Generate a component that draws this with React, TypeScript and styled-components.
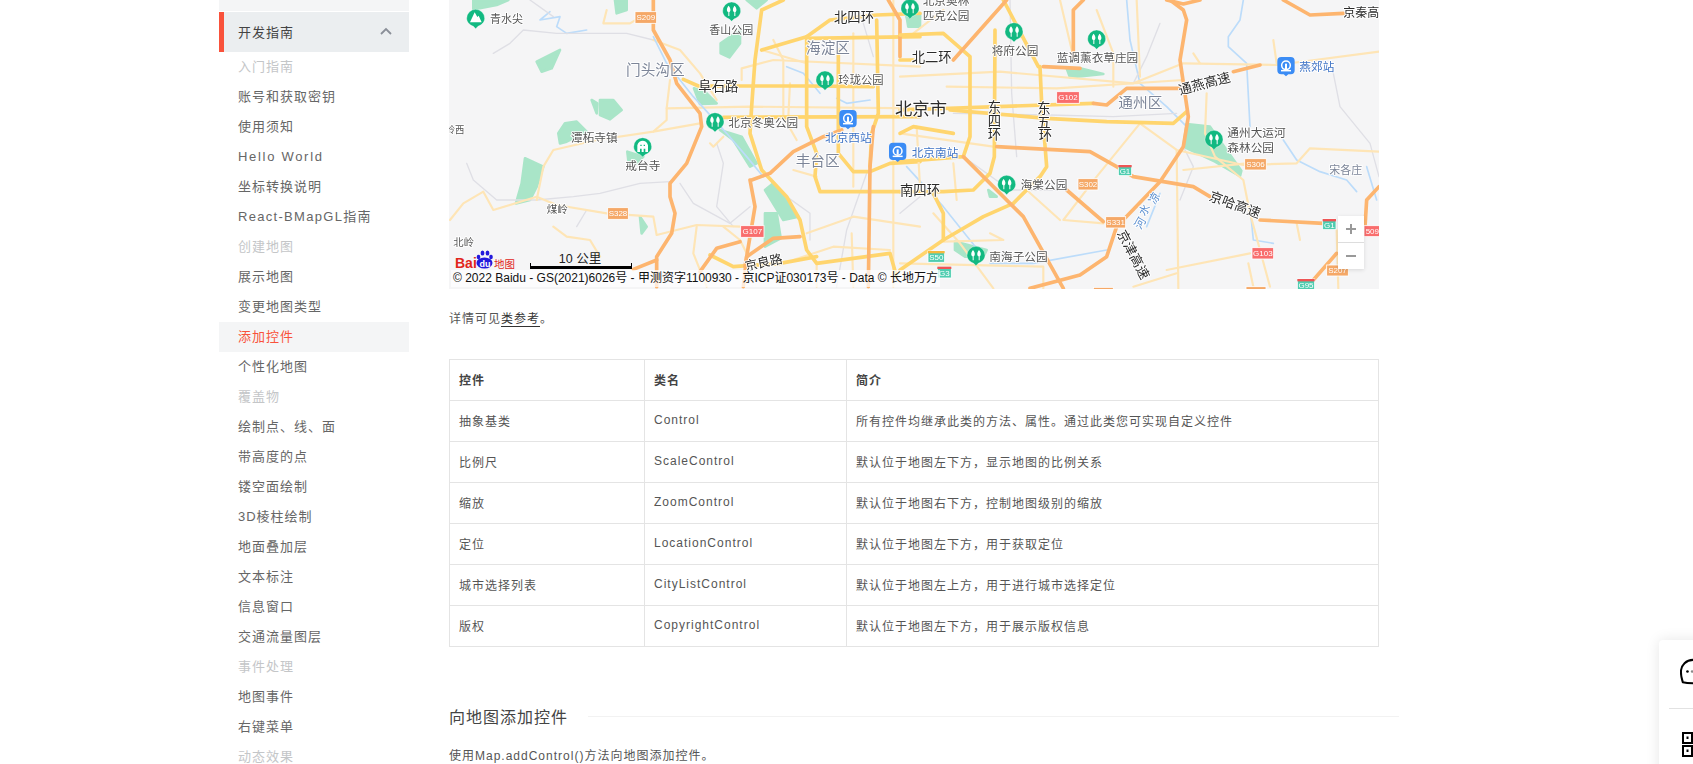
import React from "react";
import styled, { createGlobalStyle } from "styled-components";

const Global = createGlobalStyle`
  html, body { margin: 0; padding: 0; background: #fff; }
  body { font-family: "Liberation Sans", "Noto Sans CJK SC", sans-serif; color: #555; letter-spacing: 1px; }
`;
const Page = styled.div`
  position: relative; width: 1693px; height: 764px; overflow: hidden;
  display: flex; align-items: flex-start; padding-left: 219px; box-sizing: border-box; gap: 40px;
`;
const Sidebar = styled.nav`width: 190px; flex: none; font-size: 13px; display: flex; flex-direction: column;`;
const TopStub = styled.div`height: 11px; background: #f4f5f6; margin-bottom: 1px;`;
const GroupHead = styled.div`
  height: 40px; background: #ebeef0; border-left: 5px solid #f9523b; box-sizing: border-box;
  padding: 0 17px 2px 14px; display: flex; align-items: center; justify-content: space-between; color: #444;
`;
const Item = styled.div<{ $kind?: string; $ls?: number }>`
  height: 30px; line-height: 30px; padding-left: 19px; flex: none;
  letter-spacing: ${p => p.$ls ?? 1}px;
  color: ${p => (p.$kind === "muted" ? "#c4c6c8" : p.$kind === "active" ? "#f9523b" : "#666")};
  background: ${p => (p.$kind === "active" ? "#f4f5f6" : "transparent")};
`;
const Content = styled.main`width: 930px; flex: none; font-size: 12px;`;
const MapFrame = styled.div`position: relative; width: 930px; height: 289px; overflow: hidden; background: #f5f5f6;`;
const MapSvg = styled.svg`display: block; width: 930px; height: 289px; filter: blur(.3px);`;
const Road = styled.polyline<{ $k: string }>`
  fill: none; stroke-linecap: round; stroke-linejoin: round;
  stroke: ${p => ({ h: "#fdb56f", y: "#ffd56e", l: "#fee5b6", g: "#dfdfe5", b: "#bcdcfa" } as Record<string, string>)[p.$k]};
  stroke-width: ${p => ({ h: 11, y: 11, l: 6.5, g: 4, b: 5 } as Record<string, number>)[p.$k]};
`;
const Park = styled.polygon`fill: #a9e5c8; stroke: #a9e5c8; stroke-width: 8; stroke-linejoin: round;`;
const Lbl = styled.text<{ $c?: string; $s: number }>`
  font-family: "Noto Sans CJK SC", sans-serif; letter-spacing: 0;
  font-size: ${p => p.$s}px; fill: ${p => p.$c || "#555"};
  stroke: rgba(255,255,255,.9); stroke-width: 6px; paint-order: stroke; stroke-linejoin: round;
`;
const ShieldText = styled.text`font-family: "Liberation Sans", sans-serif; font-size: 24px; letter-spacing: 0; fill: #fff; text-anchor: middle;`;
const Zoom = styled.div`
  position: absolute; left: 889px; top: 216px; width: 26px; height: 53px; background: #fff;
  box-shadow: 0 1px 4px rgba(0,0,0,.12); display: flex; flex-direction: column;
`;
const ZoomBtn = styled.div`
  flex: 1; display: flex; align-items: center; justify-content: center; color: #999;
  & + & { border-top: 1px solid #ddd; }
`;
const Copyright = styled.div`
  position: absolute; left: 2px; top: 270px; height: 17px; line-height: 17px; padding: 0 2px;
  font-size: 12px; letter-spacing: 0; color: #111; background: rgba(255,255,255,.72); white-space: nowrap;
`;
const ScaleBar = styled.div`
  position: absolute; left: 81px; top: 252px; width: 102px; height: 17px; box-sizing: border-box;
  border-bottom: 3px solid #000;
  font-size: 12.500px; letter-spacing: 0; color: #222; text-align: center; line-height: 14px; padding-right: 2px;
  &::before, &::after { content: ""; position: absolute; bottom: -3px; width: 1px; height: 6px; background: #000; }
  &::before { left: 0; }
  &::after { right: 0; }
`;
const LogoWrap = styled.svg`position: absolute; left: 5px; top: 249px; width: 62px; height: 20px;`;
const Para = styled.p`margin: 0; height: 20px; line-height: 20px; color: #555; white-space: nowrap;`;
const FirstPara = styled(Para)`margin-top: 20px;`;
const Link = styled.a`color: #333; border-bottom: 1px solid #333; letter-spacing: 1px;`;
const Table = styled.table`
  margin-top: 30px; width: 930px; border-collapse: collapse; table-layout: fixed; font-size: 12px;
  th, td { border: 1px solid #e4e4e4; height: 41px; padding: 0 9px 2px; text-align: left; box-sizing: border-box; white-space: nowrap; }
  th { font-weight: 700; color: #444; }
  td { color: #555; font-weight: 400; }
`;
const WideCol = styled.col<{ $w: number }>`width: ${p => p.$w}px;`;
const Heading = styled.div`display: flex; align-items: center; width: 950px; margin-top: 57px; height: 24px; font-size: 16px; color: #444;`;
const HeadRule = styled.span`flex: 1; height: 1px; background: #f2f2f2; margin-left: 20px;`;
const MethodPara = styled(Para)`margin-top: 18px;`;
const FloatPanel = styled.aside`
  position: absolute; left: 1659px; top: 640px; width: 80px; height: 160px; background: #fff;
  border-radius: 4px 0 0 0; box-shadow: 0 0 14px rgba(0,0,0,.1);
  display: flex; flex-direction: column; align-items: flex-start; padding-left: 10px; box-sizing: border-box;
`;
const FloatIcon = styled.svg<{ $mt: number; $ml: number }>`display: block; margin-top: ${p => p.$mt}px; margin-left: ${p => p.$ml}px; flex: none;`;
const FloatRule = styled.div`width: 60px; height: 1px; background: #e2e2e2; margin-top: 22px;`;

const nav: [string, string?, number?][] = [
  ["入门指南", "muted"], ["账号和获取密钥"], ["使用须知"], ["Hello World", "", 1.7], ["坐标转换说明"], ["React-BMapGL指南", "", 1.3],
  ["创建地图", "muted"], ["展示地图"], ["变更地图类型"], ["添加控件", "active"], ["个性化地图"], ["覆盖物", "muted"],
  ["绘制点、线、面"], ["带高度的点"], ["镂空面绘制"], ["3D棱柱绘制"], ["地面叠加层"], ["文本标注"], ["信息窗口"], ["交通流量图层"],
  ["事件处理", "muted"], ["地图事件"], ["右键菜单"], ["动态效果", "muted"],
];
const rows = [
  ["抽象基类", "Control", "所有控件均继承此类的方法、属性。通过此类您可实现自定义控件"],
  ["比例尺", "ScaleControl", "默认位于地图左下方\uFF0C显示地图的比例关系"],
  ["缩放", "ZoomControl", "默认位于地图右下方\uFF0C控制地图级别的缩放"],
  ["定位", "LocationControl", "默认位于地图左下方\uFF0C用于获取定位"],
  ["城市选择列表", "CityListControl", "默认位于地图左上方\uFF0C用于进行城市选择定位"],
  ["版权", "CopyrightControl", "默认位于地图左下方\uFF0C用于展示版权信息"],
];

type R = [string, string];
const roadsA: R[] = [
  ["b", "330,35 300,60 360,50 350,80 380,100 440,90"], ["g", "160,160 210,130 250,90 350,100 560,100 640,120"], ["g", "270,0 340,50"],
  ["g", "80,490 100,540 170,600 290,600 400,590 480,580 600,550 690,545"], ["g", "720,550 760,610 870,670 930,620"],
  ["g", "410,680 440,630"], ["g", "1270,70 1300,170"], ["g", "1280,520 1220,690 1190,860"], ["g", "960,500 1040,590 1110,640 1110,720"],
  ["g", "1380,640 1440,590"], ["g", "830,430 850,490 830,620 880,680"],
  ["l", "30,660 70,610 130,575 160,630 290,590 350,615 500,640 640,650 650,705 770,675 900,680"],
  ["l", "290,600 310,500 340,450 470,420 640,395 780,370"], ["l", "640,395 680,360 680,325 930,320 1440,325"], ["l", "680,325 690,240"],
  ["l", "640,120 720,150 780,220 830,300"], ["l", "340,680 380,710 450,720 480,770"], ["l", "770,680 760,760 800,860"],
  ["l", "850,680 900,720 920,760"], ["l", "1000,120 1030,180 1030,350 1070,420"], ["l", "905,240 905,205 1000,180 1440,200"],
  ["l", "965,150 1100,190"], ["l", "1240,100 1240,560"], ["l", "1360,0 1360,860"], ["l", "1050,250 1045,350"], ["l", "1130,790 1130,860"],
  ["l", "1235,700 1240,860"], ["l", "1100,700 1240,650 1440,680"], ["l", "1060,780 1180,740 1350,750"], ["l", "500,30 490,70 570,70 620,40"],
  ["l", "810,430 820,440 850,410"], ["l", "1130,530 1060,510"], ["b", "1040,200 1090,220 1140,280"], ["b", "1190,295 1220,310 1290,300"],
  ["b", "640,110 680,190 760,290 860,400 920,470 970,530"],
  ["y", "1030,0 965,30 945,180 935,320 930,400 965,510 1040,590 1080,660 1100,750 1130,790 1350,760 1370,830"],
  ["y", "965,150 1100,110 1170,60 1310,45 1440,40"], ["y", "1100,110 1100,380 1130,460 1125,530 1140,575 1380,575"],
  ["y", "1195,150 1195,460 1240,515 1290,515 1350,490 1440,485"], ["y", "1100,115 1440,110"], ["y", "1310,60 1315,340 1295,400 1290,500"],
  ["y", "730,238 775,258 1100,258 1300,260"], ["y", "850,352 1440,350"], ["y", "810,765 880,800 1020,790 1130,770"],
  ["h", "640,0 640,90 690,180 710,250 780,340 785,380 740,490 690,550 690,590 705,640 695,700 650,770 650,860"], ["h", "580,808 650,780"],
  ["h", "780,815 830,745 900,725"], ["h", "910,860 920,770 1000,715 1080,710"], ["h", "935,540 990,520 1060,455 1150,410 1205,390"],
  ["h", "930,540 945,620 915,800"], ["h", "1285,860 1290,500 1300,380"], ["h", "1345,0 1380,60 1380,170"],
];
const roadsB: R[] = [
  ["b", "1030,0 1020,60 985,110 985,140 1040,190 1050,380"], ["b", "1150,420 1190,480 1260,515 1340,540 1370,575"],
  ["b", "720,250 800,320 860,380"], ["b", "780,580 740,680"], ["b", "270,790 400,790 620,750"], ["b", "20,500 130,620 250,770"], ["b", "680,0 690,120 720,250"],
  ["b", "1050,620 1060,720 1120,730"], ["b", "1400,500 1430,600"],
  ["g", "330,0 335,280 350,470"], ["g", "780,70 740,170 700,250"], ["g", "1300,220 1320,320 1410,430 1437,530"], ["g", "160,340 450,345 640,350 830,340"],
  ["g", "190,470 330,570 500,570 610,660"], ["g", "850,440 880,500 840,600"],
  ["l", "0,230 300,215 700,250 850,190 1130,195 1437,155"], ["l", "140,260 470,265 850,240"], ["l", "480,0 520,170"], ["l", "590,30 640,160 640,260"],
  ["l", "710,0 720,230"], ["l", "880,160 900,190"], ["l", "0,400 280,440"], ["l", "720,370 590,530 490,660 610,670"], ["l", "380,570 480,660"],
  ["l", "720,370 830,450 1030,495 1190,490 1230,445 1437,455"], ["l", "830,450 835,865"], ["l", "850,510 1040,490"], ["l", "920,280 915,400 945,470 1030,540 1050,640 1110,860"],
  ["l", "1120,120 1130,190"], ["l", "130,30 40,100"], ["l", "50,380 60,560"], ["l", "160,490 170,600"], ["l", "100,640 180,730 280,865"], ["l", "270,700 310,720 130,725"],
  ["l", "800,810 1050,760"], ["l", "1045,790 1060,860"], ["l", "0,790 430,800 430,865"], ["l", "1190,670 1200,720"], ["l", "1310,690 1315,865"], ["l", "700,860 830,820"],
  ["y", "0,105 130,100 210,170 210,410 190,470 0,485"], ["y", "285,90 283,470 270,520 220,570 130,575 0,575"], ["y", "100,580 130,640 130,720"],
  ["y", "0,330 580,310"], ["y", "0,180 40,180"], ["y", "420,200 425,310 440,500 420,530 340,610 250,650 130,720 0,810"],
  ["y", "150,330 440,355 620,365 820,370 860,335"], ["y", "310,0 415,200"], ["y", "0,400 40,380 160,400"],
  ["h", "160,180 320,0"], ["h", "290,440 570,455 650,500 700,530 880,560 930,590"], ["h", "1080,660 1270,670"],
  ["h", "810,0 850,30 860,60 840,180 865,350 850,440 780,545 650,680 620,770 540,825 390,865"], ["h", "190,470 370,650 490,865"],
  ["h", "580,310 620,315 680,265 840,265"], ["h", "1000,215 1080,195"], ["h", "430,200 540,205"], ["h", "1150,0 1230,45 1330,40"],
  ["h", "1437,560 1400,600 1395,680"], ["h", "1240,840 1310,760"], ["h", "520,170 520,30 550,0"], ["h", "500,570 610,665"], ["h", "800,0 850,12 900,0"],
];
const parksA = [
  "100,0 205,0 170,15 100,28", "290,185 360,150 335,205 305,215", "480,300 520,300 545,330 510,358 480,345", "455,300 472,310 470,340", "355,400 375,370 410,365 440,395 380,425 360,430",
  "255,475 310,500 290,560 270,600 228,610 245,550", "562,455 610,470 590,490 565,480", "842,130 900,90 900,130 868,172 842,160", "525,0 560,0 560,30 530,40",
  "920,0 950,25 980,0", "1000,550 1075,650 1030,660 975,570", "975,640 1010,640 1022,715 975,740", "762,265 800,280 830,310 780,312", "840,390 905,410 950,490 930,500 880,420", "600,650 620,680 605,700", "1400,50 1440,40 1440,80 1410,80",
];
const parksB = [
  "860,372 930,380 1024,512 1020,528 945,485 850,440", "500,205 540,205 610,222 510,232", "20,50 60,50 50,80 25,80", "165,725 260,750 250,770 195,770 165,750", "265,570 290,590 270,590",
];
type L = [string, number, number, number, string?, number?];
const dark = "#2b2b2b", gray = "#7c8598", blue = "#3d72c4";
const labelsA: L[] = [
  ["青水尖", 150, 68, 33], ["香山公园", 808, 103, 33], ["北四环", 1182, 65, 40, dark], ["海淀区", 1098, 158, 44, gray], ["门头沟区", 558, 224, 44, gray],
  ["阜石路", 775, 272, 40, dark], ["玲珑公园", 1195, 252, 34], ["北京市", 1365, 345, 52, dark], ["北京冬奥公园", 865, 380, 35], ["北京西站", 1155, 427, 35, blue],
  ["岭西", 17, 400, 28], ["潭柘寺镇", 393, 425, 35], ["戒台寺", 556, 510, 35], ["丰台区", 1067, 497, 44, gray], ["煤岭", 320, 640, 32], ["北岭", 40, 738, 31],
  ["京良路", 918, 812, 38, dark, -12], ["南四环", 1380, 585, 40, dark],
];
const labelsB: L[] = [
  ["北京奥林", 68, 15, 35], ["匹克公园", 68, 60, 35], ["将府公园", 275, 165, 35], ["北二环", 35, 187, 40, dark], ["蓝调薰衣草庄园", 470, 187, 35], ["京秦高", 1330, 52, 36, dark],
  ["燕郊站", 1198, 212, 35, blue], ["通燕高速", 840, 285, 40, dark, -15], ["通州区", 655, 325, 44, gray], ["东", 263, 335, 40, dark], ["四", 263, 378, 40, dark], ["环", 263, 418, 40, dark],
  ["东", 412, 340, 40, dark], ["五", 412, 382, 40, dark], ["环", 416, 420, 40, dark], ["通州大运河", 982, 412, 35], ["森林公园", 982, 457, 35], ["宋各庄", 1288, 522, 33, gray],
  ["海棠公园", 362, 568, 35], ["北京南站", 35, 470, 35, blue], ["京哈高速", 925, 600, 40, dark, 20], ["凉", 765, 615, 34, "#5b8fd0", -60], ["水", 735, 650, 34, "#5b8fd0", -60], ["河", 722, 690, 34, "#5b8fd0", -60],
  ["京津高速", 650, 700, 40, dark, 62], ["南海子公园", 268, 782, 35],
];
type S = [string, number, number, number, number, string, string?];
const org = "#f5a867", red = "#f96d6d", grn = "#4fcdb0";
const shieldsA: S[] = [["S209", 585, 35, 65, 35, org], ["S328", 503, 623, 62, 35, org], ["G107", 902, 677, 70, 35, red]];
const shieldsB: S[] = [
  ["G102", 470, 275, 68, 35, red], ["S306", 1034, 476, 65, 34, org], ["G1", 655, 495, 40, 32, grn, "#e55"], ["S302", 534, 536, 60, 34, org], ["S331", 617, 650, 60, 34, org],
  ["G1", 1268, 657, 40, 32, grn, "#e55"], ["509", 1392, 677, 50, 33, red], ["G103", 1056, 743, 65, 34, red], ["S50", 84, 753, 50, 34, grn, "#f5b83d"], ["G3", 112, 800, 42, 34, grn, "#e55"],
  ["S207", 1280, 795, 65, 33, org], ["G95", 1192, 837, 52, 32, grn, "#e55"], ["", 580, 862, 60, 20, org], ["", 1038, 860, 60, 20, org],
];
const pinsA: [number, number, string][] = [[107, 55, "m"], [875, 33, "t"], [1410, 25, "t"], [1155, 240, "t"], [825, 365, "t"], [608, 440, "g"]];
const pinsB: [number, number, string][] = [[30, 25, "t"], [342, 95, "t"], [590, 117, "t"], [942, 418, "t"], [320, 553, "t"], [228, 766, "t"]];
const stationsA: [number, number][] = [[1224, 357], [1373, 455]];
const stationsB: [number, number][] = [[1158, 198]];

const Pin = ({ x, y, t }: { x: number; y: number; t: string }) => (
  <g transform={`translate(${x} ${y})`}>
    <path d="M-27 0a27 27 0 1 1 54 0c0 14-12 21-20 24l-7 7-7-7c-8-3-20-10-20-24z" fill="#12b981" stroke="#fff" strokeWidth="1" />
    {t === "m" && <path d="M-17 12 -3-18 5-4 9-8 18 12z" fill="#fff" />}
    {t === "t" && <path d="M-9-16c-6 6-7 16-2 19h1v12h3V3h1c4-4 3-13-3-19zM9-16c-6 6-7 16-2 19h1v12h3V3h1c4-4 3-13-3-19z" fill="#fff" />}
    {t === "g" && <path d="M-16 16V-4C-14-14-6-18 0-18S14-14 16-4V16H8V6H3V16H-3V6H-8V16zM-7-6h4v4h-4zM3-6h4v4H3z" fill="#fff" fillRule="evenodd" />}
  </g>
);
const Station = ({ x, y }: { x: number; y: number }) => (
  <g transform={`translate(${x} ${y})`}>
    <path d="M-14-27H14A12 12 0 0 1 26-15V13A12 12 0 0 1 14 25H7L0 31-7 25H-14A12 12 0 0 1-26 13V-15A12 12 0 0 1-14-27z" fill="#3b8cf5" />
    <circle r="13" cy="-2" fill="none" stroke="#fff" strokeWidth="4.5" />
    <path d="M-15 14H15" stroke="#fff" strokeWidth="4.5" />
    <rect x="-3" y="-7" width="6" height="16" fill="#fff" />
  </g>
);
const Layer = ({ roads, parks, tx }: { roads: R[]; parks: string[]; tx: number }) => (
  <g transform={`translate(${tx} 0) scale(.33333)`}>
    {parks.map(p => <Park key={p} points={p} />)}
    {roads.map(([k, p]) => <Road key={p} $k={k} points={p} />)}
  </g>
);
const Overlay = ({ labels, shields, pins, stations, tx }: { labels: L[]; shields: S[]; pins: [number, number, string][]; stations: [number, number][]; tx: number }) => (
  <g transform={`translate(${tx} 0) scale(.33333)`}>
    {shields.map(([t, x, y, w, h, c, top], i) => (
      <g key={i}>
        <rect x={x} y={y} width={w} height={h} fill={c} stroke="#fff" strokeWidth="2.5" />
        {top && <rect x={x} y={y} width={w} height={7} fill={top} />}
        <ShieldText x={x + w / 2} y={y + h / 2 + (top ? 11 : 9)}>{t}</ShieldText>
      </g>
    ))}
    {labels.map(([t, x, y, s, c, r], i) => (
      <Lbl key={i} x={x} y={y} $s={s} $c={c} transform={r ? `rotate(${r} ${x} ${y})` : undefined}>{t}</Lbl>
    ))}
    {pins.map(([x, y, t], i) => <Pin key={i} x={x} y={y} t={t} />)}
    {stations.map(([x, y], i) => <Station key={i} x={x} y={y} />)}
  </g>
);

const LogoBai = styled.text`font-family: "Liberation Sans", sans-serif; font-weight: 700; font-size: 14px; letter-spacing: 0; fill: #e1251b;`;
const LogoDu = styled.text`font-family: "Liberation Sans", sans-serif; font-weight: 700; font-size: 9px; letter-spacing: 0; fill: #fff;`;
const LogoCn = styled.text`font-family: "Noto Sans CJK SC", sans-serif; font-size: 10.500px; letter-spacing: 0; fill: #e1251b;`;
const Logo = () => (
  <LogoWrap viewBox="0 0 62 20">
    <LogoBai x="1" y="19">Bai</LogoBai>
    <g fill="#2319dc">
      <ellipse cx="30.500" cy="14" rx="8" ry="5.500" /><ellipse cx="24.500" cy="8" rx="1.800" ry="2.300" /><ellipse cx="28.500" cy="4" rx="1.900" ry="2.500" />
      <ellipse cx="33.500" cy="4" rx="1.900" ry="2.500" /><ellipse cx="37" cy="8" rx="1.800" ry="2.300" />
    </g>
    <LogoDu x="25.500" y="18">du</LogoDu>
    <LogoCn x="40" y="18.500">地图</LogoCn>
  </LogoWrap>
);

export default function App() {
  return (
    <>
      <Global />
      <Page>
        <Sidebar>
          <TopStub />
          <GroupHead>
            开发指南
            <svg width="12" height="8" viewBox="0 0 12 8"><path d="M1 7l5-5 5 5" fill="none" stroke="#8a8f98" strokeWidth="1.8" /></svg>
          </GroupHead>
          {nav.map(([t, k, ls]) => <Item key={t} $kind={k} $ls={ls}>{t}</Item>)}
        </Sidebar>
        <Content>
          <MapFrame>
            <MapSvg viewBox="0 0 930 289">
              <Layer roads={roadsA} parks={parksA} tx={-9} />
              <Layer roads={roadsB} parks={parksB} tx={451} />
              <Overlay labels={labelsA} shields={shieldsA} pins={pinsA} stations={stationsA} tx={-9} />
              <Overlay labels={labelsB} shields={shieldsB} pins={pinsB} stations={stationsB} tx={451} />
            </MapSvg>
            <Zoom>
              <ZoomBtn><svg width="12" height="12" viewBox="0 0 12 12"><path d="M6 1v10M1 6h10" stroke="#999" strokeWidth="2" /></svg></ZoomBtn>
              <ZoomBtn><svg width="12" height="12" viewBox="0 0 12 12"><path d="M1 6h10" stroke="#999" strokeWidth="2" /></svg></ZoomBtn>
            </Zoom>
            <Logo />
            <ScaleBar>10 公里</ScaleBar>
            <Copyright>© 2022 Baidu - GS(2021)6026号 - 甲测资字1100930 - 京ICP证030173号 - Data © 长地万方</Copyright>
          </MapFrame>
          <FirstPara>详情可见<Link>类参考</Link>。</FirstPara>
          <Table>
            <colgroup><WideCol $w={195} /><WideCol $w={202} /><col /></colgroup>
            <thead><tr><th>控件</th><th>类名</th><th>简介</th></tr></thead>
            <tbody>{rows.map(r => <tr key={r[1]}><td>{r[0]}</td><td>{r[1]}</td><td>{r[2]}</td></tr>)}</tbody>
          </Table>
          <Heading>向地图添加控件<HeadRule /></Heading>
          <MethodPara>使用Map.addControl()方法向地图添加控件。</MethodPara>
        </Content>
        <FloatPanel>
          <FloatIcon $mt={18} $ml={11} width="28" height="28" viewBox="0 0 30 30">
            <path d="M3 26c-1-4-2-6-2-11C1 7 7 2 14 2s13 5 13 13-6 12-13 12c-4 0-7 0-11-1z" fill="none" stroke="#000" strokeWidth="2.200" strokeLinejoin="round" />
            <circle cx="8" cy="14.500" r="1.400" /><circle cx="13" cy="14.500" r="1.400" fill="#888" />
          </FloatIcon>
          <FloatRule />
          <FloatIcon $mt={23} $ml={13} width="26" height="26" viewBox="0 0 26 26">
            <path d="M1 1h9v10H1zM1 14h9v10H1zM15 1h9v10h-9z" fill="none" stroke="#000" strokeWidth="2" />
            <path d="M4.500 4.500h2v2.500h-2zM4.500 17.500h2v2.500h-2zM18.500 4.500h2v2.500h-2z" />
          </FloatIcon>
        </FloatPanel>
      </Page>
    </>
  );
}
